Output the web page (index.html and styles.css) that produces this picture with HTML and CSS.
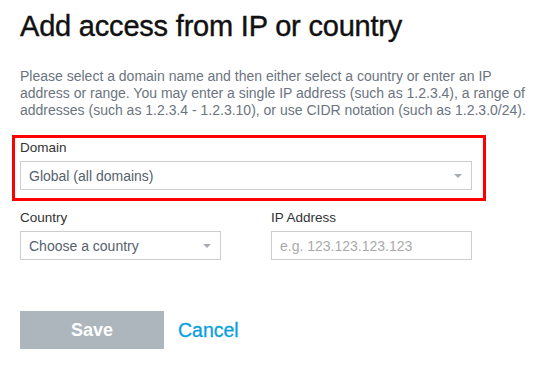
FILE: index.html
```html
<!DOCTYPE html>
<html lang="en">
  <head>
    <meta charset="UTF-8" />
    <meta name="viewport" content="width=device-width, initial-scale=1.0" />
    <title>Add access from IP or country</title>
    <link rel="stylesheet" href="styles.css">
  </head>
  <body>
    <div class="dialog">
      <h1>Add access from IP or country</h1>
      <p class="intro">
        Please select a domain name and then either select a country or enter an IP
        address or range. You may enter a single IP address (such as 1.2.3.4), a range of
        addresses (such as 1.2.3.4 - 1.2.3.10), or use CIDR notation (such as 1.2.3.0/24).
      </p>

      <div class="highlight">
        <label class="field">
          <span class="label">Domain</span>
          <span class="select">Global (all domains)</span>
        </label>
      </div>

      <div class="row">
        <label class="field">
          <span class="label">Country</span>
          <span class="select">Choose a country</span>
        </label>
        <label class="field">
          <span class="label">IP Address</span>
          <input type="text" placeholder="e.g. 123.123.123.123">
        </label>
      </div>

      <div class="actions">
        <button class="save">Save</button>
        <a class="cancel" href="#">Cancel</a>
      </div>
    </div>
  </body>
</html>
```

FILE: styles.css
```css
body {
  margin: 0;
  font-family: "Liberation Sans", Arial, sans-serif;
  background: #fff;
  color: #333;
}

.dialog {
  width: 452px;
  padding: 8px 20px 0;
}

h1 {
  margin: 0;
  font-size: 29px;
  font-weight: normal;
  line-height: 36px;
  color: #111;
  letter-spacing: -0.2px;
  -webkit-text-stroke: 0.4px #111;
}

.intro {
  width: 512px;
  margin: 24px 0 0;
  font-size: 14px;
  line-height: 17px;
  color: #6b7480;
}

.highlight {
  margin: 16px 0 0 -8px;
  width: 463px;
  padding: 2px 0 8px 5px;
  border: 3px solid #ff0000;
}

.field {
  display: flex;
  flex-direction: column;
}

.label {
  font-size: 13.5px;
  line-height: 16px;
  color: #333;
  margin-bottom: 5px;
}

.select,
.field input {
  box-sizing: border-box;
  height: 29px;
  border: 1px solid #cdcdcd;
  font-family: inherit;
  font-size: 14px;
  padding: 0 8px;
  display: flex;
  align-items: center;
  color: #56616d;
}

.select {
  position: relative;
}

.select::after {
  content: "";
  position: absolute;
  right: 9px;
  top: 12px;
  border-left: 4px solid transparent;
  border-right: 4px solid transparent;
  border-top: 4px solid #a6adb5;
}

.highlight .select {
  width: 452px;
}

.row {
  display: grid;
  grid-template-columns: 1fr 1fr;
  column-gap: 50px;
  margin-top: 9px;
}

.field input::placeholder {
  color: #aaa;
}

.actions {
  display: flex;
  align-items: center;
  gap: 14px;
  margin-top: 51px;
}

.save {
  width: 144px;
  height: 38px;
  border: none;
  background: #adb5bd;
  color: #fff;
  font-family: inherit;
  font-size: 18px;
  font-weight: bold;
}

.cancel {
  color: #0aa0de;
  font-size: 19.5px;
  text-decoration: none;
  -webkit-text-stroke: 0.3px #0aa0de;
}
```
